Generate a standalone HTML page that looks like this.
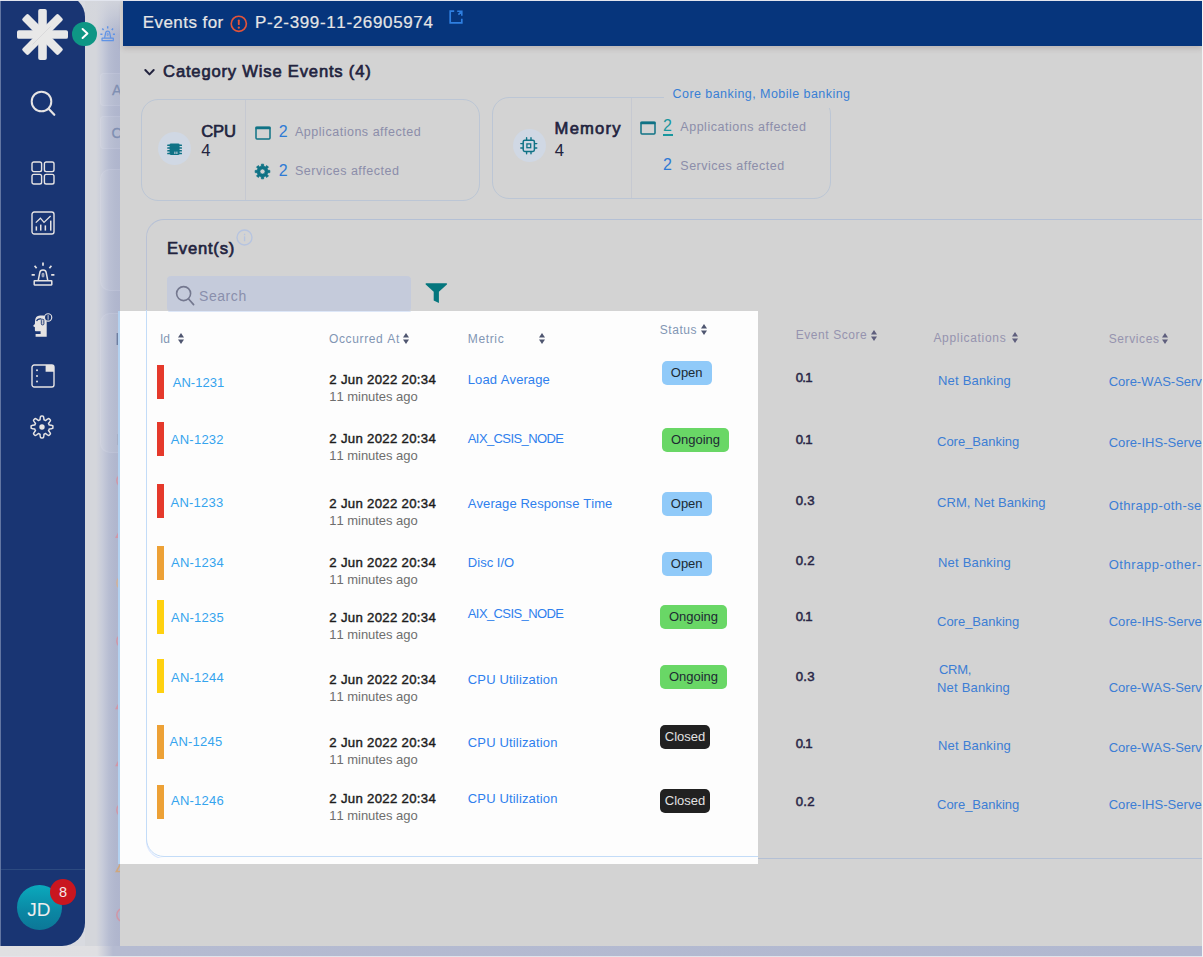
<!DOCTYPE html>
<html lang="en">
<head>
<meta charset="utf-8">
<title>Events</title>
<style>
*{box-sizing:border-box;margin:0;padding:0}
html,body{width:1203px;height:957px;overflow:hidden}
body{position:relative;background:#d8dae0;font-family:"Liberation Sans",sans-serif;font-kerning:none}
.abs{position:absolute}
.t{position:absolute;white-space:nowrap;line-height:normal}
#frame-top{left:0;top:0;width:1203px;height:1px;background:#e2e5ee}
#frame-left{left:0;top:1px;width:1px;height:945px;background:#6276a2}
#frame-right{left:1202px;top:0;width:1px;height:957px;background:#f4f4f6}
#botstrip{left:0;top:946px;width:1203px;height:11px;background:linear-gradient(90deg,#e0e0e2 0,#dfdfe2 97px,#b5bbd1 113px,#b1b8d0 1203px)}
#botline{left:0;top:956px;width:1203px;height:1px;background:#e3e4ea}
#sidebar{left:0;top:-5px;width:85px;height:951px;background:#193573;border-radius:0 22px 23px 0}
#sideline{left:0;top:869px;width:85px;height:1px;background:#2c4a80}
#panel{left:120px;top:1px;width:1082px;height:945px;background:#fdfdfd}
#phead{left:123px;top:1px;width:1079px;height:45px;background:#06357c;box-shadow:0 3px 5px rgba(90,60,60,.18)}
.dim{position:absolute;background:rgba(0,0,0,.165)}
.card{position:absolute;border:1px solid #c3d1f3;border-radius:17px}
.vline{position:absolute;width:1px;background:#eef1fb}
.ico{position:absolute;display:block;overflow:visible}
.circ{position:absolute;border-radius:50%;background:#d0d8e4}
.bar{position:absolute;width:7px;height:34px}
.badge{position:absolute;height:24px;border-radius:5px;font-size:13px;line-height:24px;text-align:center;color:#1d2a33}
.open{background:#90caf9;width:50px}
.ongoing{background:#69d766;width:67px}
.closed{background:#212121;width:50px;color:#e2e2e2}
</style>
</head>
<body>
<div class="abs" id="botstrip"></div>
<div class="abs" id="botline"></div>

<div class="abs" id="panel"></div>
<!-- strip between sidebar and panel -->
<div class="abs" id="strip" style="left:85px;top:1px;width:35px;height:945px;overflow:hidden">
<div class="abs" style="left:0;top:0;width:35px;height:945px;background:linear-gradient(90deg,#d4d6db 0,#d4d6db 11px,#c8ccda 17px,#b7bdd2 24px,#b1b7ce 30px,#afb5cd 35px)"></div>
<div class="abs" style="left:0;top:0;width:35px;height:34px;background:linear-gradient(180deg,rgba(213,215,221,.85) 0,rgba(213,215,221,.55) 14px,rgba(213,215,221,0) 34px)"></div>
<div class="abs" style="left:14.7px;top:71.5px;width:40px;height:33px;border-radius:4px;background:rgba(255,255,255,.06);border:1px solid rgba(228,232,246,.12)"></div>
<div class="abs" style="left:14.7px;top:114.6px;width:40px;height:33.5px;border-radius:4px;background:rgba(255,255,255,.06);border:1px solid rgba(228,232,246,.12)"></div>
<div class="abs" style="left:14.7px;top:168px;width:40px;height:122px;border-radius:10px;background:rgba(255,255,255,.06);border:1px solid rgba(228,232,246,.12)"></div>
<div class="abs" style="left:14.7px;top:312px;width:40px;height:140px;border-radius:10px;background:rgba(255,255,255,.06);border:1px solid rgba(228,232,246,.12)"></div>
<svg class="ico" style="left:0;top:0" width="35" height="945" viewBox="0 0 35 945"><circle cx="38.4" cy="479.6" r="6.6" fill="none" stroke="#d98f9c" stroke-width="1.5" opacity=".8"/><circle cx="38.4" cy="582" r="6.6" fill="none" stroke="#dcb088" stroke-width="1.5" opacity=".8"/><circle cx="38.4" cy="640" r="6.6" fill="none" stroke="#d98f9c" stroke-width="1.5" opacity=".8"/><circle cx="38.4" cy="809" r="6.6" fill="none" stroke="#d98f9c" stroke-width="1.5" opacity=".8"/><circle cx="38.4" cy="914" r="6.6" fill="none" stroke="#d98f9c" stroke-width="1.5" opacity=".8"/><path d="M31.4 536.2 38 524.2 44.6 536.2Z" fill="none" stroke="#d98f9c" stroke-width="1.6" opacity=".8"/><path d="M31.4 707.5 38 695.5 44.6 707.5Z" fill="none" stroke="#d98f9c" stroke-width="1.6" opacity=".8"/><path d="M31.4 764.5 38 752.5 44.6 764.5Z" fill="none" stroke="#d98f9c" stroke-width="1.6" opacity=".8"/><path d="M31.4 870.5 38 858.5 44.6 870.5Z" fill="none" stroke="#d6a46a" stroke-width="1.6" opacity=".8"/><rect x="31.6" y="332" width="2.4" height="12" fill="#5d6f93" opacity=".8"/><rect x="32.6" y="433" width="1.2" height="11" fill="#8e98b4" opacity=".8"/></svg>
</div>
<div class="abs" style="left:85px;top:1px;width:35px;height:945px;overflow:hidden"><div class="abs" style="left:-85px;top:-1px;width:300px;height:957px"><div class="t" style="left:112.0px;top:81.7px;font-size:14.5px;font-weight:400;color:#7f8fb2;letter-spacing:0.00px;-webkit-text-stroke:.3px;">A</div>
<div class="t" style="left:111.5px;top:124.7px;font-size:14.5px;font-weight:400;color:#7f8fb2;letter-spacing:0.00px;-webkit-text-stroke:.3px;">C</div></div></div>
<svg class="ico" style="left:99.6px;top:26px" width="15.36" height="15.36" viewBox="0 0 24 24" ><g fill="none" stroke="#5f93e6" stroke-width="1.9"><path d="M7.2 18.6 8.8 10.6Q9.2 8 12 8Q14.8 8 15.2 10.6L16.8 18.6"/><rect x="3.2" y="18.8" width="17.6" height="4.2" rx=".4"/><path d="M12 .4V3.8M3.6 3.8 5.6 6.2M20.4 3.8 18.4 6.2M.6 12.8H3.8M23.4 12.8H20.2" stroke-width="2.1849999999999996"/><rect x="11.2" y="11.4" width="1.6" height="3.4" rx=".4" stroke-width="1.14"/></g></svg>


<!-- panel content (page coords) -->
<svg class="ico" style="left:144.2px;top:67.6px" width="11" height="9" viewBox="0 0 11 9" ><path d="M1.3 2 5.5 6.4 9.7 2" fill="none" stroke="#292a4b" stroke-width="2" stroke-linecap="round" stroke-linejoin="round"/></svg>
<div class="card" style="left:141px;top:99px;width:339px;height:102px;border-color:#e1eeff"></div>
<div class="vline" style="left:245px;top:100px;height:100px"></div>
<svg class="ico" style="left:255px;top:126.3px" width="16" height="14" viewBox="0 0 16 14" ><rect x="1" y="1.6" width="14" height="11.4" rx="1" fill="none" stroke="#1289a0" stroke-width="1.5"/><rect x="0.4" y="0.6" width="15.2" height="2.6" rx=".6" fill="#1289a0"/></svg>
<svg class="ico" style="left:255.2px;top:163.9px" width="15" height="15" viewBox="0 0 15 15" ><path d="M6.40 0.18 L8.60 0.18 L8.76 2.25 L10.32 2.90 L11.90 1.55 L13.45 3.10 L12.10 4.68 L12.75 6.24 L14.82 6.40 L14.82 8.60 L12.75 8.76 L12.10 10.32 L13.45 11.90 L11.90 13.45 L10.32 12.10 L8.76 12.75 L8.60 14.82 L6.40 14.82 L6.24 12.75 L4.68 12.10 L3.10 13.45 L1.55 11.90 L2.90 10.32 L2.25 8.76 L0.18 8.60 L0.18 6.40 L2.25 6.24 L2.90 4.68 L1.55 3.10 L3.10 1.55 L4.68 2.90 L6.24 2.25Z M7.5 4.9A2.6 2.6 0 1 0 7.5 10.1A2.6 2.6 0 1 0 7.5 4.9Z" fill="#1289a0" fill-rule="evenodd" stroke="#1289a0" stroke-width=".8" stroke-linejoin="round"/></svg>
<div class="card" style="left:491.5px;top:96.5px;width:339px;height:102px;border-color:#e1eeff"></div>
<div class="abs" style="left:664px;top:90px;width:200px;height:18px;background:#fdfdfd"></div>
<div class="vline" style="left:630.5px;top:98px;height:100px"></div>
<svg class="ico" style="left:639.8px;top:120.5px" width="16" height="14" viewBox="0 0 16 14" ><rect x="1" y="1.6" width="14" height="11.4" rx="1" fill="none" stroke="#1289a0" stroke-width="1.5"/><rect x="0.4" y="0.6" width="15.2" height="2.6" rx=".6" fill="#1289a0"/></svg>
<div class="abs" style="left:662.8px;top:134.4px;width:9.8px;height:1.3px;background:#1fb5be"></div>
<div class="card" style="left:145.5px;top:218.5px;width:1100px;height:640.4px;border-radius:18px;border-color:#d8e6ff #d8e6ff #d8e6ff #dfe9ff"></div>
<div class="abs" style="left:150px;top:857.6px;width:608px;height:3px;background:#fdfdfd"></div>
<svg class="ico" style="left:177.5px;top:332.5px" width="6" height="11" viewBox="0 0 6 11" ><path d="M3 0 6 4.4H0Z" fill="#4f5670"/><path d="M3 11 6 6.6H0Z" fill="#4f5670"/></svg>
<svg class="ico" style="left:403px;top:333.0px" width="6" height="11" viewBox="0 0 6 11" ><path d="M3 0 6 4.4H0Z" fill="#4f5670"/><path d="M3 11 6 6.6H0Z" fill="#4f5670"/></svg>
<svg class="ico" style="left:538.5px;top:333.0px" width="6" height="11" viewBox="0 0 6 11" ><path d="M3 0 6 4.4H0Z" fill="#4f5670"/><path d="M3 11 6 6.6H0Z" fill="#4f5670"/></svg>
<svg class="ico" style="left:701px;top:324.0px" width="6" height="11" viewBox="0 0 6 11" ><path d="M3 0 6 4.4H0Z" fill="#4f5670"/><path d="M3 11 6 6.6H0Z" fill="#4f5670"/></svg>
<svg class="ico" style="left:871px;top:329.5px" width="6" height="11" viewBox="0 0 6 11" ><path d="M3 0 6 4.4H0Z" fill="#727296"/><path d="M3 11 6 6.6H0Z" fill="#727296"/></svg>
<svg class="ico" style="left:1011.5px;top:332.0px" width="6" height="11" viewBox="0 0 6 11" ><path d="M3 0 6 4.4H0Z" fill="#727296"/><path d="M3 11 6 6.6H0Z" fill="#727296"/></svg>
<svg class="ico" style="left:1162px;top:333.2px" width="6" height="11" viewBox="0 0 6 11" ><path d="M3 0 6 4.4H0Z" fill="#727296"/><path d="M3 11 6 6.6H0Z" fill="#727296"/></svg>
<div class="bar" style="left:157px;top:364.5px;background:#e5392b"></div>
<div class="badge open" style="left:661.7px;top:361px">Open</div>
<div class="bar" style="left:157px;top:421.7px;background:#e5392b"></div>
<div class="badge ongoing" style="left:662px;top:428px">Ongoing</div>
<div class="bar" style="left:157px;top:484.2px;background:#e5392b"></div>
<div class="badge open" style="left:661.7px;top:492px">Open</div>
<div class="bar" style="left:157px;top:545.8px;background:#eda136"></div>
<div class="badge open" style="left:661.7px;top:552px">Open</div>
<div class="bar" style="left:157px;top:600px;background:#ffd110"></div>
<div class="badge ongoing" style="left:660px;top:605px">Ongoing</div>
<div class="bar" style="left:157px;top:658.6px;background:#ffd110"></div>
<div class="badge ongoing" style="left:660px;top:665px">Ongoing</div>
<div class="bar" style="left:157px;top:724.8px;background:#eda136"></div>
<div class="badge closed" style="left:660px;top:725px">Closed</div>
<div class="bar" style="left:157px;top:784.7px;background:#eda136"></div>
<div class="badge closed" style="left:660px;top:789px">Closed</div>
<div class="t" style="left:163.1px;top:62.4px;font-size:16.6px;font-weight:400;color:#292a4b;letter-spacing:0.81px;-webkit-text-stroke:.65px;">Category Wise Events (4)</div>
<div class="t" style="left:201.2px;top:122.1px;font-size:16.6px;font-weight:400;color:#292a4b;letter-spacing:-0.18px;-webkit-text-stroke:.65px;">CPU</div>
<div class="t" style="left:201.3px;top:141.3px;font-size:16.6px;font-weight:400;color:#292a4b;letter-spacing:0.00px;">4</div>
<div class="t" style="left:278.7px;top:123.1px;font-size:16px;font-weight:400;color:#3893ff;letter-spacing:0.00px;">2</div>
<div class="t" style="left:295.0px;top:125.2px;font-size:12.5px;font-weight:400;color:#a8aacc;letter-spacing:0.52px;">Applications affected</div>
<div class="t" style="left:278.7px;top:161.8px;font-size:16px;font-weight:400;color:#3893ff;letter-spacing:0.00px;">2</div>
<div class="t" style="left:295.0px;top:164.2px;font-size:12.5px;font-weight:400;color:#a8aacc;letter-spacing:0.50px;">Services affected</div>
<div class="t" style="left:554.6px;top:119.4px;font-size:16.6px;font-weight:400;color:#292a4b;letter-spacing:1.21px;-webkit-text-stroke:.65px;">Memory</div>
<div class="t" style="left:554.8px;top:140.6px;font-size:16.6px;font-weight:400;color:#292a4b;letter-spacing:0.00px;">4</div>
<div class="t" style="left:672.5px;top:86.9px;font-size:12.5px;font-weight:400;color:#4599ff;letter-spacing:0.45px;">Core banking, Mobile banking</div>
<div class="t" style="left:663.0px;top:116.9px;font-size:16px;font-weight:400;color:#1fb5be;letter-spacing:0.00px;">2</div>
<div class="t" style="left:680.3px;top:119.6px;font-size:12.5px;font-weight:400;color:#a8aacc;letter-spacing:0.52px;">Applications affected</div>
<div class="t" style="left:663.0px;top:155.8px;font-size:16px;font-weight:400;color:#3893ff;letter-spacing:0.00px;">2</div>
<div class="t" style="left:680.3px;top:158.5px;font-size:12.5px;font-weight:400;color:#a8aacc;letter-spacing:0.50px;">Services affected</div>
<div class="t" style="left:167.0px;top:239.0px;font-size:16.6px;font-weight:400;color:#292a4b;letter-spacing:0.78px;-webkit-text-stroke:.65px;">Event(s)</div>
<div class="t" style="left:160.0px;top:331.8px;font-size:12px;font-weight:400;color:#8296b4;letter-spacing:0.00px;">Id</div>
<div class="t" style="left:329.0px;top:331.8px;font-size:12px;font-weight:400;color:#8296b4;letter-spacing:0.63px;">Occurred At</div>
<div class="t" style="left:467.8px;top:331.8px;font-size:12px;font-weight:400;color:#8296b4;letter-spacing:0.64px;">Metric</div>
<div class="t" style="left:659.7px;top:323.1px;font-size:12px;font-weight:400;color:#8296b4;letter-spacing:0.58px;">Status</div>
<div class="t" style="left:795.7px;top:328.3px;font-size:12px;font-weight:400;color:#b4b1d2;letter-spacing:0.57px;">Event Score</div>
<div class="t" style="left:933.4px;top:330.8px;font-size:12px;font-weight:400;color:#b4b1d2;letter-spacing:0.69px;">Applications</div>
<div class="t" style="left:1108.7px;top:332.0px;font-size:12px;font-weight:400;color:#b4b1d2;letter-spacing:0.60px;">Services</div>
<div class="t" style="left:172.7px;top:374.5px;font-size:13px;font-weight:400;color:#35a4ee;letter-spacing:0.03px;">AN-1231</div>
<div class="t" style="left:329.3px;top:371.7px;font-size:13.2px;font-weight:400;color:#1b1b1b;letter-spacing:0.30px;-webkit-text-stroke:.4px;">2 Jun 2022 20:34</div>
<div class="t" style="left:329.3px;top:388.7px;font-size:13px;font-weight:400;color:#6e6e6e;letter-spacing:-0.04px;">11 minutes ago</div>
<div class="t" style="left:467.8px;top:371.7px;font-size:13px;font-weight:400;color:#2f80ed;letter-spacing:0.09px;">Load Average</div>
<div class="t" style="left:795.7px;top:370.4px;font-size:13.2px;font-weight:400;color:#302e54;letter-spacing:-0.78px;-webkit-text-stroke:.5px;">0.1</div>
<div class="t" style="left:938.0px;top:372.7px;font-size:13px;font-weight:400;color:#4997ff;letter-spacing:0.20px;">Net Banking</div>
<div class="t" style="left:1108.7px;top:373.7px;font-size:13px;font-weight:400;color:#4997ff;letter-spacing:0.00px;">Core-WAS-Server</div>
<div class="t" style="left:170.8px;top:431.7px;font-size:13px;font-weight:400;color:#35a4ee;letter-spacing:0.24px;">AN-1232</div>
<div class="t" style="left:329.3px;top:430.7px;font-size:13.2px;font-weight:400;color:#1b1b1b;letter-spacing:0.30px;-webkit-text-stroke:.4px;">2 Jun 2022 20:34</div>
<div class="t" style="left:329.3px;top:447.7px;font-size:13px;font-weight:400;color:#6e6e6e;letter-spacing:-0.04px;">11 minutes ago</div>
<div class="t" style="left:467.8px;top:430.7px;font-size:13px;font-weight:400;color:#2f80ed;letter-spacing:-0.60px;">AIX_CSIS_NODE</div>
<div class="t" style="left:795.7px;top:431.7px;font-size:13.2px;font-weight:400;color:#302e54;letter-spacing:-0.78px;-webkit-text-stroke:.5px;">0.1</div>
<div class="t" style="left:937.0px;top:433.7px;font-size:13px;font-weight:400;color:#4997ff;letter-spacing:-0.01px;">Core_Banking</div>
<div class="t" style="left:1108.7px;top:435.2px;font-size:13px;font-weight:400;color:#4997ff;letter-spacing:0.04px;">Core-IHS-Server</div>
<div class="t" style="left:170.5px;top:495.3px;font-size:13px;font-weight:400;color:#35a4ee;letter-spacing:0.24px;">AN-1233</div>
<div class="t" style="left:329.3px;top:496.4px;font-size:13.2px;font-weight:400;color:#1b1b1b;letter-spacing:0.30px;-webkit-text-stroke:.4px;">2 Jun 2022 20:34</div>
<div class="t" style="left:329.3px;top:513.3px;font-size:13px;font-weight:400;color:#6e6e6e;letter-spacing:-0.04px;">11 minutes ago</div>
<div class="t" style="left:467.8px;top:496.3px;font-size:13px;font-weight:400;color:#2f80ed;letter-spacing:0.07px;">Average Response Time</div>
<div class="t" style="left:795.7px;top:493.4px;font-size:13.2px;font-weight:400;color:#302e54;letter-spacing:0.22px;-webkit-text-stroke:.5px;">0.3</div>
<div class="t" style="left:937.0px;top:495.2px;font-size:13px;font-weight:400;color:#4997ff;letter-spacing:0.05px;">CRM, Net Banking</div>
<div class="t" style="left:1108.7px;top:498.2px;font-size:13px;font-weight:400;color:#4997ff;letter-spacing:0.40px;">Othrapp-oth-service</div>
<div class="t" style="left:171.0px;top:554.7px;font-size:13px;font-weight:400;color:#35a4ee;letter-spacing:0.24px;">AN-1234</div>
<div class="t" style="left:329.3px;top:554.7px;font-size:13.2px;font-weight:400;color:#1b1b1b;letter-spacing:0.30px;-webkit-text-stroke:.4px;">2 Jun 2022 20:34</div>
<div class="t" style="left:329.3px;top:571.7px;font-size:13px;font-weight:400;color:#6e6e6e;letter-spacing:-0.04px;">11 minutes ago</div>
<div class="t" style="left:467.8px;top:554.7px;font-size:13px;font-weight:400;color:#2f80ed;letter-spacing:0.03px;">Disc I/O</div>
<div class="t" style="left:795.7px;top:552.7px;font-size:13.2px;font-weight:400;color:#302e54;letter-spacing:0.22px;-webkit-text-stroke:.5px;">0.2</div>
<div class="t" style="left:938.0px;top:554.7px;font-size:13px;font-weight:400;color:#4997ff;letter-spacing:0.20px;">Net Banking</div>
<div class="t" style="left:1108.7px;top:556.7px;font-size:13px;font-weight:400;color:#4997ff;letter-spacing:0.55px;">Othrapp-other-service</div>
<div class="t" style="left:171.0px;top:609.7px;font-size:13px;font-weight:400;color:#35a4ee;letter-spacing:0.24px;">AN-1235</div>
<div class="t" style="left:329.3px;top:609.7px;font-size:13.2px;font-weight:400;color:#1b1b1b;letter-spacing:0.30px;-webkit-text-stroke:.4px;">2 Jun 2022 20:34</div>
<div class="t" style="left:329.3px;top:626.7px;font-size:13px;font-weight:400;color:#6e6e6e;letter-spacing:-0.04px;">11 minutes ago</div>
<div class="t" style="left:467.8px;top:605.7px;font-size:13px;font-weight:400;color:#2f80ed;letter-spacing:-0.60px;">AIX_CSIS_NODE</div>
<div class="t" style="left:795.7px;top:608.7px;font-size:13.2px;font-weight:400;color:#302e54;letter-spacing:-0.78px;-webkit-text-stroke:.5px;">0.1</div>
<div class="t" style="left:937.0px;top:614.2px;font-size:13px;font-weight:400;color:#4997ff;letter-spacing:-0.01px;">Core_Banking</div>
<div class="t" style="left:1108.7px;top:614.2px;font-size:13px;font-weight:400;color:#4997ff;letter-spacing:0.04px;">Core-IHS-Server</div>
<div class="t" style="left:171.0px;top:670.3px;font-size:13px;font-weight:400;color:#35a4ee;letter-spacing:0.24px;">AN-1244</div>
<div class="t" style="left:329.3px;top:671.7px;font-size:13.2px;font-weight:400;color:#1b1b1b;letter-spacing:0.30px;-webkit-text-stroke:.4px;">2 Jun 2022 20:34</div>
<div class="t" style="left:329.3px;top:688.7px;font-size:13px;font-weight:400;color:#6e6e6e;letter-spacing:-0.04px;">11 minutes ago</div>
<div class="t" style="left:467.8px;top:671.7px;font-size:13px;font-weight:400;color:#2f80ed;letter-spacing:0.16px;">CPU Utilization</div>
<div class="t" style="left:795.7px;top:669.2px;font-size:13.2px;font-weight:400;color:#302e54;letter-spacing:0.22px;-webkit-text-stroke:.5px;">0.3</div>
<div class="t" style="left:939.0px;top:661.7px;font-size:13px;font-weight:400;color:#4997ff;letter-spacing:-0.30px;">CRM,</div>
<div class="t" style="left:937.0px;top:680.2px;font-size:13px;font-weight:400;color:#4997ff;letter-spacing:0.20px;">Net Banking</div>
<div class="t" style="left:1108.7px;top:680.2px;font-size:13px;font-weight:400;color:#4997ff;letter-spacing:0.00px;">Core-WAS-Server</div>
<div class="t" style="left:169.5px;top:733.7px;font-size:13px;font-weight:400;color:#35a4ee;letter-spacing:0.24px;">AN-1245</div>
<div class="t" style="left:329.3px;top:735.2px;font-size:13.2px;font-weight:400;color:#1b1b1b;letter-spacing:0.30px;-webkit-text-stroke:.4px;">2 Jun 2022 20:34</div>
<div class="t" style="left:329.3px;top:752.2px;font-size:13px;font-weight:400;color:#6e6e6e;letter-spacing:-0.04px;">11 minutes ago</div>
<div class="t" style="left:467.8px;top:735.2px;font-size:13px;font-weight:400;color:#2f80ed;letter-spacing:0.16px;">CPU Utilization</div>
<div class="t" style="left:795.7px;top:735.7px;font-size:13.2px;font-weight:400;color:#302e54;letter-spacing:-0.78px;-webkit-text-stroke:.5px;">0.1</div>
<div class="t" style="left:938.0px;top:738.3px;font-size:13px;font-weight:400;color:#4997ff;letter-spacing:0.20px;">Net Banking</div>
<div class="t" style="left:1108.7px;top:739.5px;font-size:13px;font-weight:400;color:#4997ff;letter-spacing:0.00px;">Core-WAS-Server</div>
<div class="t" style="left:171.0px;top:792.7px;font-size:13px;font-weight:400;color:#35a4ee;letter-spacing:0.24px;">AN-1246</div>
<div class="t" style="left:329.3px;top:791.4px;font-size:13.2px;font-weight:400;color:#1b1b1b;letter-spacing:0.30px;-webkit-text-stroke:.4px;">2 Jun 2022 20:34</div>
<div class="t" style="left:329.3px;top:808.3px;font-size:13px;font-weight:400;color:#6e6e6e;letter-spacing:-0.04px;">11 minutes ago</div>
<div class="t" style="left:467.8px;top:791.3px;font-size:13px;font-weight:400;color:#2f80ed;letter-spacing:0.16px;">CPU Utilization</div>
<div class="t" style="left:795.7px;top:794.3px;font-size:13.2px;font-weight:400;color:#302e54;letter-spacing:0.22px;-webkit-text-stroke:.5px;">0.2</div>
<div class="t" style="left:937.0px;top:796.7px;font-size:13px;font-weight:400;color:#4997ff;letter-spacing:-0.01px;">Core_Banking</div>
<div class="t" style="left:1108.7px;top:797.2px;font-size:13px;font-weight:400;color:#4997ff;letter-spacing:0.04px;">Core-IHS-Server</div>

<!-- dim overlay with spotlight hole -->
<div class="dim" style="left:120px;top:1px;width:1082px;height:309.5px"></div>
<div class="dim" style="left:758px;top:310.5px;width:444px;height:553.8px"></div>
<div class="dim" style="left:120px;top:864.3px;width:1082px;height:81.7px"></div>

<div class="circ" style="left:158.3px;top:132.4px;width:33px;height:33px"></div>
<svg class="ico" style="left:167.4px;top:142.6px" width="15.2" height="12.6" viewBox="0 0 15.2 12.6" ><rect x="2.6" y="0.6" width="10" height="11.4" rx="1.4" fill="#0f7286"/><rect x="0.2" y="1.6" width="14.8" height="1.5" rx=".5" fill="#0f7286"/><rect x="0.2" y="4.3" width="14.8" height="1.5" rx=".5" fill="#0f7286"/><rect x="0.2" y="7.0" width="14.8" height="1.5" rx=".5" fill="#0f7286"/><rect x="0.2" y="9.7" width="14.8" height="1.5" rx=".5" fill="#0f7286"/><rect x="7.4" y="8.6" width="1" height="2.4" fill="#d0d8e4"/><rect x="9.4" y="8.6" width="1" height="2.4" fill="#d0d8e4"/></svg>
<div class="circ" style="left:512.6px;top:128.8px;width:33px;height:33px"></div>
<svg class="ico" style="left:520.2px;top:136.7px" width="17.6" height="17.6" viewBox="0 0 17.6 17.6" ><g fill="none" stroke="#0f7286" stroke-width="1.5"><rect x="3.2" y="3.2" width="11.2" height="11.2" rx="1.6"/><rect x="6.9" y="6.9" width="3.8" height="3.8" stroke-width="1.3"/></g><g stroke="#0f7286" stroke-width="1.4" stroke-linecap="round"><path d="M6.6 0.8V2.6M6.6 15V16.8M0.8 6.6H2.6M15 6.6H16.8"/><path d="M11 0.8V2.6M11 15V16.8M0.8 11H2.6M15 11H16.8"/></g></svg>
<div class="abs" style="left:120px;top:310px;width:638px;height:554px;overflow:hidden"><div class="card" style="left:25.5px;top:-91.5px;width:1100px;height:638.6px;border-radius:18px;border-color:#c3dcf8;border-width:1.3px"></div></div>
<div class="abs" style="left:118.4px;top:310.5px;width:1.8px;height:553.5px;background:#b4d2f0"></div>
<svg class="ico" style="left:235.9px;top:229.4px" width="17" height="17" viewBox="0 0 17 17" ><circle cx="8.5" cy="8.5" r="7.5" fill="none" stroke="#b6c4e0" stroke-width="1.35"/><rect x="7.9" y="7.3" width="1.3" height="5" fill="#b6c4e0"/><rect x="7.9" y="4.7" width="1.3" height="1.5" fill="#b6c4e0"/></svg>
<div class="abs" style="left:167.5px;top:310.5px;width:243px;height:1.2px;background:#dde7f8;border-radius:0 0 3px 3px"></div>
<div class="abs" style="left:167px;top:276px;width:244px;height:34.6px;background:#c5cbdb;border-radius:4px 4px 3px 3px"></div>
<svg class="ico" style="left:174.5px;top:284.5px" width="20" height="21" viewBox="0 0 20 21" ><circle cx="8.6" cy="8.6" r="7" fill="none" stroke="#74788f" stroke-width="1.6"/><path d="M13.6 14 18.6 19.6" stroke="#74788f" stroke-width="1.7" stroke-linecap="round"/></svg>
<svg class="ico" style="left:425px;top:283px" width="23" height="21" viewBox="0 0 23 21" ><path d="M1.2 0.3H21.4Q22.7 0.5 21.9 1.6L13.9 8.8V19.9L8.7 17.4V8.8L0.7 1.6Q0 0.5 1.2 0.3Z" fill="#04767d"/></svg>
<div class="t" style="left:199.0px;top:287.7px;font-size:14px;font-weight:400;color:#8a8fac;letter-spacing:0.57px;">Search</div>
<div class="abs" id="phead"></div>
<svg class="ico" style="left:229.8px;top:14.6px" width="17.6" height="17.6" viewBox="0 0 16 16" ><circle cx="8" cy="8" r="6.9" fill="none" stroke="#e2543a" stroke-width="1.5"/><rect x="7.15" y="4" width="1.7" height="5.2" rx=".85" fill="#e2543a"/><circle cx="8" cy="11.5" r="1.05" fill="#e2543a"/></svg>
<svg class="ico" style="left:449px;top:9.5px" width="14" height="14" viewBox="0 0 14 14" ><path d="M5.2 1.2H1.2V12.8H12.8V8.8" fill="none" stroke="#2f7fe0" stroke-width="1.7"/><path d="M8.2 1.2H12.8V5.8M12.6 1.4L9.4 4.6" fill="none" stroke="#2f7fe0" stroke-width="1.6"/></svg>
<div class="t" style="left:142.7px;top:13.3px;font-size:17px;font-weight:400;color:#e6e6e6;letter-spacing:0.45px;-webkit-text-stroke:.2px;">Events for</div>
<div class="t" style="left:255.0px;top:13.3px;font-size:17px;font-weight:400;color:#e6e6e6;letter-spacing:0.64px;-webkit-text-stroke:.2px;">P-2-399-11-26905974</div>

<div class="abs" id="sidebar"></div>
<div class="abs" id="sideline"></div>
<svg class="ico" style="left:16.9px;top:9.4px" width="51" height="51" viewBox="-25.5 -25.5 51 51" ><rect x="-4.3" y="-25.5" width="8.6" height="51" rx="1.9" fill="#e8e8e8" transform="rotate(0)"/><rect x="-4.3" y="-25.5" width="8.6" height="51" rx="1.9" fill="#e8e8e8" transform="rotate(45)"/><rect x="-4.3" y="-25.5" width="8.6" height="51" rx="1.9" fill="#e8e8e8" transform="rotate(90)"/><rect x="-4.3" y="-25.5" width="8.6" height="51" rx="1.9" fill="#e8e8e8" transform="rotate(135)"/><path d="M-10 10 8 -8" stroke="#d2d2d6" stroke-width=".7"/></svg>
<div class="abs" style="left:72px;top:21.6px;width:24.6px;height:24.6px;border-radius:50%;background:#0e9685"></div>
<svg class="ico" style="left:80.4px;top:27.4px" width="10" height="13" viewBox="0 0 10 13" ><path d="M2.6 2 7.4 6.5 2.6 11" fill="none" stroke="#fff" stroke-width="2" stroke-linecap="round" stroke-linejoin="round"/></svg>
<svg class="ico" style="left:30px;top:90px" width="26" height="27" viewBox="0 0 26 27" ><circle cx="11.5" cy="11.5" r="9.8" fill="none" stroke="#e6e4e4" stroke-width="2"/><path d="M18.6 18.8 24.3 24.8" stroke="#e6e4e4" stroke-width="2.2" stroke-linecap="round"/></svg>
<svg class="ico" style="left:30.6px;top:160.6px" width="24" height="24" viewBox="0 0 24 24" ><g fill="none" stroke="#e6e4e4" stroke-width="1.4"><rect x="1" y="1" width="9.6" height="9.6" rx="1.8"/><rect x="13.4" y="1" width="9.6" height="9.6" rx="1.8"/><rect x="1" y="13.4" width="9.6" height="9.6" rx="1.8"/><rect x="13.4" y="13.4" width="9.6" height="9.6" rx="1.8"/></g></svg>
<svg class="ico" style="left:30.6px;top:211.2px" width="24" height="24" viewBox="0 0 24 24" ><g fill="none" stroke="#e6e4e4" stroke-width="1.4"><rect x="1" y="1" width="22" height="22" rx="2.2"/><path d="M4.8 11.6 9.4 7.2 13 11.4 19.6 5" stroke-width="1.3"/></g><g fill="#e6e4e4"><rect x="4.6" y="15.4" width="1.5" height="4.2"/><rect x="9" y="13.6" width="1.5" height="6"/><rect x="13.6" y="14.4" width="1.5" height="5.2"/><rect x="19" y="9.6" width="1.5" height="10"/></g></svg>
<svg class="ico" style="left:30.6px;top:262.2px" width="24" height="24" viewBox="0 0 24 24" ><g fill="none" stroke="#e6e4e4" stroke-width="1.5"><path d="M7.2 18.6 8.8 10.6Q9.2 8 12 8Q14.8 8 15.2 10.6L16.8 18.6"/><rect x="3.2" y="18.8" width="17.6" height="4.2" rx=".4"/><path d="M12 .4V3.8M3.6 3.8 5.6 6.2M20.4 3.8 18.4 6.2M.6 12.8H3.8M23.4 12.8H20.2" stroke-width="1.7249999999999999"/><rect x="11.2" y="11.4" width="1.6" height="3.4" rx=".4" stroke-width="0.8999999999999999"/></g></svg>
<svg class="ico" style="left:33px;top:312px" width="21" height="26" viewBox="0 0 21 26" ><path d="M2 9.5Q2 3.8 7 3.6H10.3Q13.7 3.8 13.7 10.2V24.8H2.6V22.1H7.6V19.3H2.8Q1.9 19.2 1.9 18V15.3L0 14.1 1.9 12.1Z" fill="#e6e4e4"/><path d="M3.6 9.2Q4.4 6.4 8.4 6.9" fill="none" stroke="#193573" stroke-width="1.1"/><rect x="8.3" y="7.3" width="2.6" height="5.6" rx="1.1" fill="#c8c8d0" stroke="#193573" stroke-width=".9"/><circle cx="15.1" cy="5.4" r="3.65" fill="#193573" stroke="#e6e4e4" stroke-width="1.15"/><rect x="14.65" y="3.1" width=".9" height="4.6" fill="#e6e4e4"/></svg>
<svg class="ico" style="left:30.6px;top:364px" width="24" height="24" viewBox="0 0 24 24" ><rect x="1" y="1" width="22" height="22" rx="2.2" fill="none" stroke="#e6e4e4" stroke-width="1.4"/><path d="M14.6 1H21Q23 1 23 3V7.8H14.6Z" fill="#e6e4e4"/><g fill="#e6e4e4"><circle cx="6" cy="6.2" r="1"/><circle cx="6" cy="12" r="1"/><circle cx="6" cy="17.6" r="1"/></g></svg>
<svg class="ico" style="left:30.4px;top:414.6px" width="24" height="24" viewBox="0 0 24 24" ><path d="M12.00 1.10 L12.29 1.10 L12.57 1.11 L12.86 1.13 L13.14 1.16 L13.39 1.45 L13.58 2.05 L13.72 2.70 L13.84 3.35 L13.92 4.00 L13.98 4.60 L14.10 4.90 L14.29 4.96 L14.47 5.02 L14.65 5.09 L14.83 5.16 L15.01 5.24 L15.19 5.32 L15.36 5.41 L15.53 5.50 L15.83 5.36 L16.30 4.98 L16.81 4.59 L17.36 4.20 L17.92 3.85 L18.48 3.56 L18.86 3.53 L19.08 3.71 L19.29 3.90 L19.50 4.09 L19.71 4.29 L19.91 4.50 L20.10 4.71 L20.29 4.92 L20.47 5.14 L20.44 5.52 L20.15 6.08 L19.80 6.64 L19.41 7.19 L19.02 7.70 L18.64 8.17 L18.50 8.47 L18.59 8.64 L18.68 8.81 L18.76 8.99 L18.84 9.17 L18.91 9.35 L18.98 9.53 L19.04 9.71 L19.10 9.90 L19.40 10.02 L20.00 10.08 L20.65 10.16 L21.30 10.28 L21.95 10.42 L22.55 10.61 L22.84 10.86 L22.87 11.14 L22.89 11.43 L22.90 11.71 L22.90 12.00 L22.90 12.29 L22.89 12.57 L22.87 12.86 L22.84 13.14 L22.55 13.39 L21.95 13.58 L21.30 13.72 L20.65 13.84 L20.00 13.92 L19.40 13.98 L19.10 14.10 L19.04 14.29 L18.98 14.47 L18.91 14.65 L18.84 14.83 L18.76 15.01 L18.68 15.19 L18.59 15.36 L18.50 15.53 L18.64 15.83 L19.02 16.30 L19.41 16.81 L19.80 17.36 L20.15 17.92 L20.44 18.48 L20.47 18.86 L20.29 19.08 L20.10 19.29 L19.91 19.50 L19.71 19.71 L19.50 19.91 L19.29 20.10 L19.08 20.29 L18.86 20.47 L18.48 20.44 L17.92 20.15 L17.36 19.80 L16.81 19.41 L16.30 19.02 L15.83 18.64 L15.53 18.50 L15.36 18.59 L15.19 18.68 L15.01 18.76 L14.83 18.84 L14.65 18.91 L14.47 18.98 L14.29 19.04 L14.10 19.10 L13.98 19.40 L13.92 20.00 L13.84 20.65 L13.72 21.30 L13.58 21.95 L13.39 22.55 L13.14 22.84 L12.86 22.87 L12.57 22.89 L12.29 22.90 L12.00 22.90 L11.71 22.90 L11.43 22.89 L11.14 22.87 L10.86 22.84 L10.61 22.55 L10.42 21.95 L10.28 21.30 L10.16 20.65 L10.08 20.00 L10.02 19.40 L9.90 19.10 L9.71 19.04 L9.53 18.98 L9.35 18.91 L9.17 18.84 L8.99 18.76 L8.81 18.68 L8.64 18.59 L8.47 18.50 L8.17 18.64 L7.70 19.02 L7.19 19.41 L6.64 19.80 L6.08 20.15 L5.52 20.44 L5.14 20.47 L4.92 20.29 L4.71 20.10 L4.50 19.91 L4.29 19.71 L4.09 19.50 L3.90 19.29 L3.71 19.08 L3.53 18.86 L3.56 18.48 L3.85 17.92 L4.20 17.36 L4.59 16.81 L4.98 16.30 L5.36 15.83 L5.50 15.53 L5.41 15.36 L5.32 15.19 L5.24 15.01 L5.16 14.83 L5.09 14.65 L5.02 14.47 L4.96 14.29 L4.90 14.10 L4.60 13.98 L4.00 13.92 L3.35 13.84 L2.70 13.72 L2.05 13.58 L1.45 13.39 L1.16 13.14 L1.13 12.86 L1.11 12.57 L1.10 12.29 L1.10 12.00 L1.10 11.71 L1.11 11.43 L1.13 11.14 L1.16 10.86 L1.45 10.61 L2.05 10.42 L2.70 10.28 L3.35 10.16 L4.00 10.08 L4.60 10.02 L4.90 9.90 L4.96 9.71 L5.02 9.53 L5.09 9.35 L5.16 9.17 L5.24 8.99 L5.32 8.81 L5.41 8.64 L5.50 8.47 L5.36 8.17 L4.98 7.70 L4.59 7.19 L4.20 6.64 L3.85 6.08 L3.56 5.52 L3.53 5.14 L3.71 4.92 L3.90 4.71 L4.09 4.50 L4.29 4.29 L4.50 4.09 L4.71 3.90 L4.92 3.71 L5.14 3.53 L5.52 3.56 L6.08 3.85 L6.64 4.20 L7.19 4.59 L7.70 4.98 L8.17 5.36 L8.47 5.50 L8.64 5.41 L8.81 5.32 L8.99 5.24 L9.17 5.16 L9.35 5.09 L9.53 5.02 L9.71 4.96 L9.90 4.90 L10.02 4.60 L10.08 4.00 L10.16 3.35 L10.28 2.70 L10.42 2.05 L10.61 1.45 L10.86 1.16 L11.14 1.13 L11.43 1.11 L11.71 1.10Z" fill="none" stroke="#e6e4e4" stroke-width="1.5" stroke-linejoin="round"/><circle cx="12" cy="12" r="2.7" fill="#e6e4e4"/></svg>
<div class="abs" style="left:17px;top:885.3px;width:44.8px;height:44.8px;border-radius:50%;background:linear-gradient(180deg,#0aaabd 0%,#0b86a3 60%,#0c7797 100%)"></div>
<div class="abs" style="left:50px;top:879.2px;width:25.6px;height:25.6px;border-radius:50%;background:#c9161f"></div>
<div class="t" style="left:27.3px;top:899.1px;font-size:19px;font-weight:400;color:#eee;letter-spacing:0.00px;">JD</div>
<div class="t" style="left:58.9px;top:884.0px;font-size:14.5px;font-weight:400;color:#f4eaea;letter-spacing:0.00px;">8</div>

<div class="abs" id="frame-top"></div>
<div class="abs" id="frame-left"></div>
<div class="abs" id="frame-right"></div>
</body>
</html>
